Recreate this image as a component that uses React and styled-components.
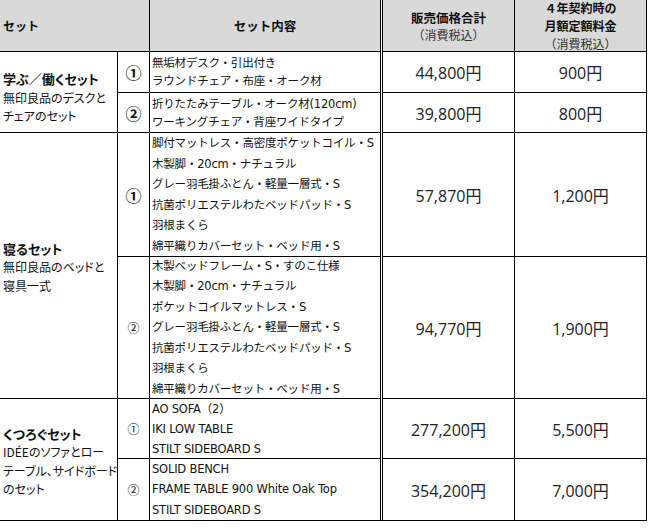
import React from "react";
import styled, { createGlobalStyle } from "styled-components";

const Global = createGlobalStyle`
  html, body { margin: 0; padding: 0; background: #fff; }
  body {
    font-family: "DejaVu Sans", "Noto Sans CJK JP", sans-serif;
    color: #111;
  }
`;

const Grid = styled.div`
  display: grid;
  width: max-content;
  background: #000;
  gap: 1px;
  padding: 0 1px 1px 0;
  grid-template-columns: 117px 31px 230px 1px 131px 131px;
  grid-template-rows: 51px 40px 39px 123px 141px 59px 61px;
`;

const Cell = styled.div`
  background: ${(p) => (p.$head ? "#d9d9d9" : "#fff")};
  grid-column: ${(p) => p.$col};
  grid-row: ${(p) => p.$row};
  display: flex;
  flex-direction: column;
  justify-content: center;
  min-width: 0;
  overflow: hidden;
`;

const Spacer = styled.div`
  background: #fff;
  grid-column: 4;
  grid-row: 1 / -1;
`;

const HeadLeft = styled(Cell)`
  padding-left: 3px;
  font-family: "Noto Sans CJK JP", sans-serif;
  font-weight: 700;
  font-size: 12px;
`;

const HeadCenter = styled(Cell)`
  align-items: center;
  text-align: center;
  font-family: "Noto Sans CJK JP", sans-serif;
  font-size: 12px;
  line-height: ${(p) => p.$lh || 17}px;
`;

const Bold = styled.span`
  font-weight: 700;
  font-size: ${(p) => p.$size || 12.5}px;
`;

const Sub = styled.span`
  font-weight: 400;
  font-size: 12px;
  color: #333;
`;

const Label = styled(Cell)`
  padding-left: 3px;
  font-family: "Noto Sans CJK JP", sans-serif;
  font-size: 12px;
  line-height: 18.5px;
  padding-top: ${(p) => p.$pt || 0}px;
  white-space: nowrap;
  font-feature-settings: "palt";
`;

const LabelTitle = styled.span`
  font-weight: 700;
  font-size: 13px;
`;

const Num = styled(Cell)`
  align-items: center;
  font-family: "DejaVu Serif", "Noto Sans CJK JP", serif;
  font-size: ${(p) => (p.$big ? 16 : 12)}px;
  font-weight: ${(p) => (p.$big ? 700 : 400)};
`;

const Content = styled(Cell)`
  padding-left: 2px;
  font-family: "DejaVu Sans", "Noto Sans CJK JP", sans-serif;
  font-size: 11.5px;
  line-height: ${(p) => p.$lh}px;
  white-space: nowrap;
  letter-spacing: -0.2px;
`;

const Price = styled(Cell)`
  align-items: center;
  font-family: "Open Sans", "Noto Sans CJK JP", sans-serif;
  font-size: 16px;
  font-weight: 400;
  color: #222;
`;

const rows = [
  {
    row: 2,
    num: "①",
    big: true,
    lh: 18,
    items: ["無垢材デスク・引出付き", "ラウンドチェア・布座・オーク材"],
    price: "44,800円",
    monthly: "900円",
  },
  {
    row: 3,
    num: "②",
    big: true,
    lh: 18,
    items: ["折りたたみテーブル・オーク材(120cm)", "ワーキングチェア・背座ワイドタイプ"],
    price: "39,800円",
    monthly: "800円",
  },
  {
    row: 4,
    num: "①",
    big: true,
    lh: 20.5,
    items: [
      "脚付マットレス・高密度ポケットコイル・S",
      "木製脚・20cm・ナチュラル",
      "グレー羽毛掛ふとん・軽量一層式・S",
      "抗菌ポリエステルわたベッドパッド・S",
      "羽根まくら",
      "綿平織りカバーセット・ベッド用・S",
    ],
    price: "57,870円",
    monthly: "1,200円",
  },
  {
    row: 5,
    num: "②",
    big: false,
    lh: 20.5,
    items: [
      "木製ベッドフレーム・S・すのこ仕様",
      "木製脚・20cm・ナチュラル",
      "ポケットコイルマットレス・S",
      "グレー羽毛掛ふとん・軽量一層式・S",
      "抗菌ポリエステルわたベッドパッド・S",
      "羽根まくら",
      "綿平織りカバーセット・ベッド用・S",
    ],
    price: "94,770円",
    monthly: "1,900円",
  },
  {
    row: 6,
    num: "①",
    big: false,
    lh: 20,
    items: ["AO SOFA（2）", "IKI LOW TABLE", "STILT SIDEBOARD S"],
    price: "277,200円",
    monthly: "5,500円",
  },
  {
    row: 7,
    num: "②",
    big: false,
    lh: 20.5,
    items: ["SOLID BENCH", "FRAME TABLE 900 White Oak Top", "STILT SIDEBOARD S"],
    price: "354,200円",
    monthly: "7,000円",
  },
];

const labels = [
  { row: "2 / 4", title: "学ぶ／働くセット", lines: ["無印良品のデスクと", "チェアのセット"], pt: 12 },
  { row: "4 / 6", title: "寝るセット", lines: ["無印良品のベッドと", "寝具一式"], pt: 4 },
  { row: "6 / 8", title: "くつろぐセット", lines: ["IDÉEのソファとロー", "テーブル、サイドボード", "のセット"], pt: 4 },
];

export default function App() {
  return (
    <>
      <Global />
      <Grid>
        <HeadLeft $head $col="1 / 3" $row="1">セット</HeadLeft>
        <HeadCenter $head $col="3" $row="1">
          <Bold>セット内容</Bold>
        </HeadCenter>
        <Spacer />
        <HeadCenter $head $col="5" $row="1" $lh={17}>
          <Bold>販売価格合計</Bold>
          <Sub>（消費税込）</Sub>
        </HeadCenter>
        <HeadCenter $head $col="6" $row="1" $lh={18}>
          <Bold $size={12}>４年契約時の</Bold>
          <Bold $size={12}>月額定額料金</Bold>
          <Sub>（消費税込）</Sub>
        </HeadCenter>

        {labels.map((l) => (
          <Label key={l.title} $col="1" $row={l.row} $pt={l.pt}>
            <LabelTitle>{l.title}</LabelTitle>
            {l.lines.map((t) => (
              <span key={t}>{t}</span>
            ))}
          </Label>
        ))}

        {rows.map((r) => (
          <React.Fragment key={r.row}>
            <Num $col="2" $row={r.row} $big={r.big}>{r.num}</Num>
            <Content $col="3" $row={r.row} $lh={r.lh}>
              {r.items.map((t, i) => (
                <span key={i}>{t}</span>
              ))}
            </Content>
            <Price $col="5" $row={r.row}>{r.price}</Price>
            <Price $col="6" $row={r.row}>{r.monthly}</Price>
          </React.Fragment>
        ))}
      </Grid>
    </>
  );
}
